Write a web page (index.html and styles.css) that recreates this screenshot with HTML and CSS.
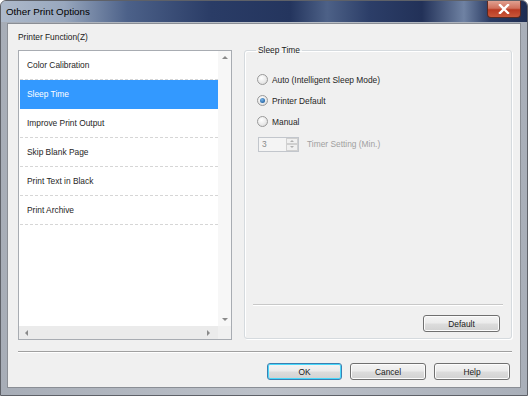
FILE: index.html
```html
<!DOCTYPE html>
<html lang="en">
<head>
    <meta charset="UTF-8">
    <title>Other Print Options</title>
    <link rel="stylesheet" href="styles.css">
</head>
<body>

    <div class="window">
        <div class="titlebar">
            <span class="title">Other Print Options</span>
            <div class="close">
                <svg width="12" height="10" viewBox="0 0 12 10">
                    <path d="M2 1 L10 9 M10 1 L2 9" stroke="#fff" stroke-width="2.4" stroke-linecap="square"/>
                </svg>
            </div>
        </div>

        <div class="client">
            <div class="main">
                <div class="functions">
                    <div class="label">Printer Function(Z)</div>
                    <div class="listbox">
                        <div class="list-body">
                            <ul class="items">
                                <li>Color Calibration</li>
                                <li class="selected">Sleep Time</li>
                                <li>Improve Print Output</li>
                                <li>Skip Blank Page</li>
                                <li>Print Text in Black</li>
                                <li>Print Archive</li>
                            </ul>
                            <div class="vscroll">
                                <span class="arrow up"></span>
                                <span class="arrow down"></span>
                            </div>
                        </div>
                        <div class="hscroll">
                            <div class="htrack">
                                <span class="arrow left"></span>
                                <span class="arrow right"></span>
                            </div>
                            <div class="corner"></div>
                        </div>
                    </div>
                </div>

                <fieldset class="group">
                    <legend>Sleep Time</legend>
                    <div class="options">
                        <label class="radio-row"><span class="radio"></span>Auto (Intelligent Sleep Mode)</label>
                        <label class="radio-row"><span class="radio checked"></span>Printer Default</label>
                        <label class="radio-row"><span class="radio"></span>Manual</label>
                        <div class="spin-row">
                            <div class="spinbox">
                                <span class="spin-value">3</span>
                                <div class="spin-buttons">
                                    <span class="spin-btn"><span class="arrow up small"></span></span>
                                    <span class="spin-btn"><span class="arrow down small"></span></span>
                                </div>
                            </div>
                            <span class="disabled-text">Timer Setting (Min.)</span>
                        </div>
                    </div>
                    <div class="group-footer">
                        <button type="button" class="btn">Default</button>
                    </div>
                </fieldset>
            </div>

            <div class="footer">
                <button type="button" class="btn primary">OK</button>
                <button type="button" class="btn">Cancel</button>
                <button type="button" class="btn">Help</button>
            </div>
        </div>
    </div>

</body>
</html>
```

FILE: styles.css
```css
body {
    margin: 0;
    padding: 0;
    background-color: #ffffff;
    font-family: "Liberation Sans", Arial, sans-serif;
}
.window {
    width: 528px;
    height: 396px;
    box-sizing: border-box;
    background: linear-gradient(to right, #a7adb7, #bcc1c9 50%, #a9afb9);
    border: 1px solid #5e6168;
    border-radius: 6px 6px 0 0;
    display: flex;
    flex-direction: column;
    overflow: hidden;
}
.titlebar {
    height: 21px;
    flex-shrink: 0;
    display: flex;
    align-items: flex-start;
    justify-content: space-between;
    background: linear-gradient(to right, #aebacb 0%, #98a7bd 12%, #4c6189 24%, #2a3c66 40%, #24355e 55%, #4d6187 62%, #2c3e68 70%, #223158 80%, #6f82a3 88%, #2a3b63 93%, #1e2d52 100%);
}
.title {
    font-size: 9.8px;
    color: #000000;
    line-height: 12px;
    padding: 5px 0 0 5px;
}
.close {
    width: 34px;
    height: 17px;
    margin-right: 6px;
    border: 1px solid #5a2a22;
    border-top: none;
    border-radius: 0 0 4px 4px;
    background: linear-gradient(to bottom, #e0a090 0%, #d0705c 45%, #b93a22 55%, #c9573a 100%);
    display: flex;
    align-items: center;
    justify-content: center;
    box-sizing: border-box;
}
.client {
    flex-grow: 1;
    margin: 1px 6px 7px 6px;
    background-color: #f0f0f0;
    border: 1px solid #8a8e95;
    padding: 7px 8px 0 10px;
    font-size: 8.4px;
    color: #1a1a1a;
    display: flex;
    flex-direction: column;
}
.main {
    display: flex;
    height: 309px;
}
.functions {
    width: 214px;
    display: flex;
    flex-direction: column;
}
.label {
    height: 19px;
    line-height: 12px;
}
.listbox {
    flex-grow: 1;
    border: 1px solid #a8acb2;
    background-color: #ffffff;
    display: flex;
    flex-direction: column;
}
.list-body {
    flex-grow: 1;
    display: flex;
}
.items {
    list-style: none;
    margin: 0;
    padding: 0 0 0 1px;
    flex-grow: 1;
}
.items li {
    height: 28px;
    line-height: 28px;
    padding-left: 7px;
    border-bottom: 1px dashed #d6d6d6;
    color: #262626;
}
.items li.selected {
    background-color: #3399ff;
    color: #ffffff;
    border-bottom-color: #3399ff;
}
.vscroll {
    width: 13px;
    background-color: #f7f7f7;
    display: flex;
    flex-direction: column;
    justify-content: space-between;
    align-items: center;
    padding: 5px 0;
}
.hscroll {
    height: 13px;
    display: flex;
}
.htrack {
    flex-grow: 1;
    background-color: #ebebeb;
    display: flex;
    justify-content: space-between;
    align-items: center;
    padding: 0 8px 0 6px;
}
.corner {
    width: 13px;
    background-color: #f0f0f0;
}
.arrow {
    width: 0;
    height: 0;
    border: 3px solid transparent;
}
.arrow.up {
    border-top: none;
    border-bottom: 3px solid #8a8a8a;
}
.arrow.down {
    border-bottom: none;
    border-top: 3px solid #8a8a8a;
}
.arrow.left {
    border-left: none;
    border-right: 3px solid #8a8a8a;
}
.arrow.right {
    border-right: none;
    border-left: 3px solid #8a8a8a;
}
.arrow.small {
    border-width: 2px;
}
.arrow.small.up {
    border-bottom-color: #b0b0b0;
}
.arrow.small.down {
    border-top-color: #b0b0b0;
}
.group {
    margin: 13px 0 0 12px;
    width: 268px;
    height: 295px;
    box-sizing: border-box;
    border: 1px solid #d5dade;
    border-radius: 3px;
    padding: 0 8px 6px 8px;
    display: flex;
    flex-direction: column;
    box-shadow: inset 1px 1px 0 #ffffff, 1px 1px 0 #ffffff;
}
.group legend {
    padding: 0 2px;
    margin-left: 3px;
    line-height: 12px;
}
.options {
    padding: 13px 0 0 4px;
    display: flex;
    flex-direction: column;
}
.radio-row {
    height: 21px;
    display: flex;
    align-items: center;
    color: #262626;
}
.radio {
    width: 11px;
    height: 11px;
    box-sizing: border-box;
    border-radius: 50%;
    border: 1px solid #9a9a9a;
    background: radial-gradient(circle at 40% 35%, #ffffff 0%, #e8e8e8 60%, #cfcfcf 100%);
    margin-right: 4px;
    display: flex;
    align-items: center;
    justify-content: center;
}
.radio.checked::after {
    content: "";
    width: 5px;
    height: 5px;
    border-radius: 50%;
    background: radial-gradient(circle at 40% 35%, #7ab6e8 0%, #1f5f9f 80%);
}
.spin-row {
    display: flex;
    align-items: center;
    height: 16px;
    margin-top: 4px;
    padding-left: 1px;
}
.spinbox {
    width: 41px;
    height: 15px;
    box-sizing: border-box;
    border: 1px solid #c2c6cc;
    background-color: #f4f4f4;
    display: flex;
}
.spin-value {
    flex-grow: 1;
    color: #8a8a8a;
    padding-left: 3px;
    line-height: 13px;
}
.spin-buttons {
    width: 12px;
    display: flex;
    flex-direction: column;
}
.spin-btn {
    flex-grow: 1;
    border: 1px solid #d0d0d0;
    background-color: #f0f0f0;
    display: flex;
    align-items: center;
    justify-content: center;
}
.disabled-text {
    color: #a0a0a0;
    margin-left: 8px;
}
.group-footer {
    margin-top: auto;
    border-top: 1px solid #c8c8c8;
    box-shadow: inset 0 1px 0 #ffffff;
    padding-top: 10px;
    display: flex;
    justify-content: flex-end;
}
.btn {
    font-family: "Liberation Sans", Arial, sans-serif;
    font-size: 8.4px;
    color: #1a1a1a;
    width: 76px;
    height: 17px;
    padding: 0;
    border: 1px solid #707070;
    border-radius: 3px;
    background: linear-gradient(to bottom, #f4f4f4 0%, #ebebeb 48%, #dddddd 52%, #d1d1d1 100%);
    box-shadow: inset 0 0 0 1px #fcfcfc;
}
.group-footer .btn {
    width: 77px;
    margin-right: 3px;
}
.btn.primary {
    border-color: #3c7fb1;
    box-shadow: inset 0 0 0 1px #48d8fb;
    width: 75px;
}
.footer {
    margin-top: 11px;
    border-top: 1px solid #a0a0a0;
    box-shadow: inset 0 1px 0 #ffffff;
    padding: 11px 2px 0 0;
    display: flex;
    justify-content: flex-end;
    gap: 8px;
}
```
